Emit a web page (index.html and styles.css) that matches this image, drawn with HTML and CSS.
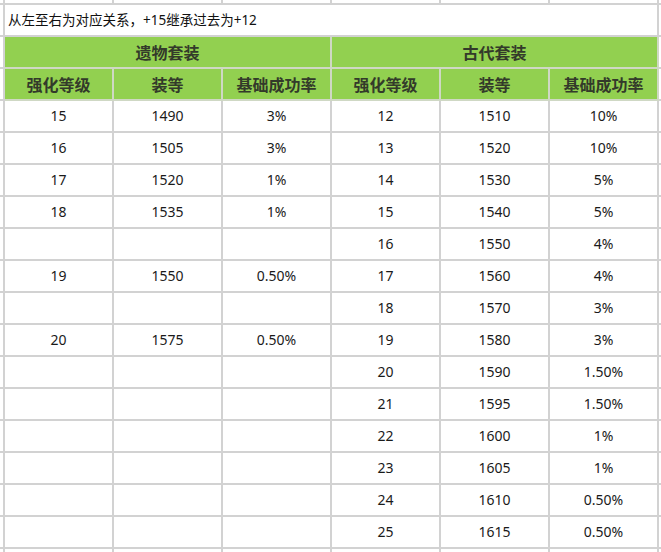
FILE: index.html
```html
<!DOCTYPE html>
<html lang="zh-CN">
<head>
<meta charset="utf-8">
<title>套装对应表</title>
<link rel="stylesheet" href="styles.css">
</head>
<body>
<table class="sheet">
  <colgroup>
    <col class="c-edge"><col class="c"><col class="c"><col class="c"><col class="c"><col class="c"><col class="c"><col class="c-tail">
  </colgroup>
  <tr class="r-edge"><td></td><td></td><td></td><td></td><td></td><td></td><td></td><td class="tail"></td></tr>
  <tr class="r">
    <td></td>
    <td colspan="6" class="title">从左至右为对应关系，+15继承过去为+12</td>
    <td class="tail"></td>
  </tr>
  <tr class="r head">
    <td class="plain"></td>
    <th colspan="3">遗物套装</th>
    <th colspan="3">古代套装</th>
    <td class="tail plain"></td>
  </tr>
  <tr class="r head">
    <td class="plain"></td>
    <th>强化等级</th><th>装等</th><th>基础成功率</th>
    <th>强化等级</th><th>装等</th><th>基础成功率</th>
    <td class="tail plain"></td>
  </tr>
  <tr class="r"><td></td><td>15</td><td>1490</td><td>3%</td><td>12</td><td>1510</td><td>10%</td><td class="tail"></td></tr>
  <tr class="r"><td></td><td>16</td><td>1505</td><td>3%</td><td>13</td><td>1520</td><td>10%</td><td class="tail"></td></tr>
  <tr class="r"><td></td><td>17</td><td>1520</td><td>1%</td><td>14</td><td>1530</td><td>5%</td><td class="tail"></td></tr>
  <tr class="r"><td></td><td>18</td><td>1535</td><td>1%</td><td>15</td><td>1540</td><td>5%</td><td class="tail"></td></tr>
  <tr class="r"><td></td><td></td><td></td><td></td><td>16</td><td>1550</td><td>4%</td><td class="tail"></td></tr>
  <tr class="r"><td></td><td>19</td><td>1550</td><td>0.50%</td><td>17</td><td>1560</td><td>4%</td><td class="tail"></td></tr>
  <tr class="r"><td></td><td></td><td></td><td></td><td>18</td><td>1570</td><td>3%</td><td class="tail"></td></tr>
  <tr class="r"><td></td><td>20</td><td>1575</td><td>0.50%</td><td>19</td><td>1580</td><td>3%</td><td class="tail"></td></tr>
  <tr class="r"><td></td><td></td><td></td><td></td><td>20</td><td>1590</td><td>1.50%</td><td class="tail"></td></tr>
  <tr class="r"><td></td><td></td><td></td><td></td><td>21</td><td>1595</td><td>1.50%</td><td class="tail"></td></tr>
  <tr class="r"><td></td><td></td><td></td><td></td><td>22</td><td>1600</td><td>1%</td><td class="tail"></td></tr>
  <tr class="r"><td></td><td></td><td></td><td></td><td>23</td><td>1605</td><td>1%</td><td class="tail"></td></tr>
  <tr class="r"><td></td><td></td><td></td><td></td><td>24</td><td>1610</td><td>0.50%</td><td class="tail"></td></tr>
  <tr class="r"><td></td><td></td><td></td><td></td><td>25</td><td>1615</td><td>0.50%</td><td class="tail"></td></tr>
  <tr class="r-end"><td></td><td></td><td></td><td></td><td></td><td></td><td></td><td class="tail"></td></tr>
</table>
</body>
</html>
```

FILE: styles.css
```css
html, body {
  margin: 0;
  padding: 0;
  background: #ffffff;
  overflow: hidden;
}

body {
  width: 661px;
  height: 552px;
  font-family: "Noto Sans", "Noto Sans CJK SC", sans-serif;
  color: #1a1a1a;
}

.sheet {
  border-collapse: separate;
  border-spacing: 0;
  table-layout: fixed;
  width: 661px;
}

.sheet td,
.sheet th {
  padding: 0;
  border-right: 2px solid #d2d2d2;
  border-bottom: 2px solid #d2d2d2;
  text-align: center;
  font-size: 14px;
  line-height: 30px;
  white-space: nowrap;
  overflow: hidden;
}

.c-edge { width: 5px; }
.c { width: 109px; }
.c-tail { width: 2px; }

.sheet .tail {
  border-right: none;
}

.r-edge td {
  height: 3px;
  line-height: 3px;
}

.r td, .r th {
  height: 30px;
}

.r-end td {
  height: 4px;
  line-height: 4px;
  border-bottom: none;
}

.sheet .title {
  text-align: left;
  padding-left: 3px;
  font-size: 13.5px;
  color: #111;
}

.head th {
  background: #92d050;
  font-family: "Noto Sans CJK SC", sans-serif;
  font-size: 16px;
  font-weight: 700;
  color: #333a2a;
  border-color: #cfd8c4;
}
```
